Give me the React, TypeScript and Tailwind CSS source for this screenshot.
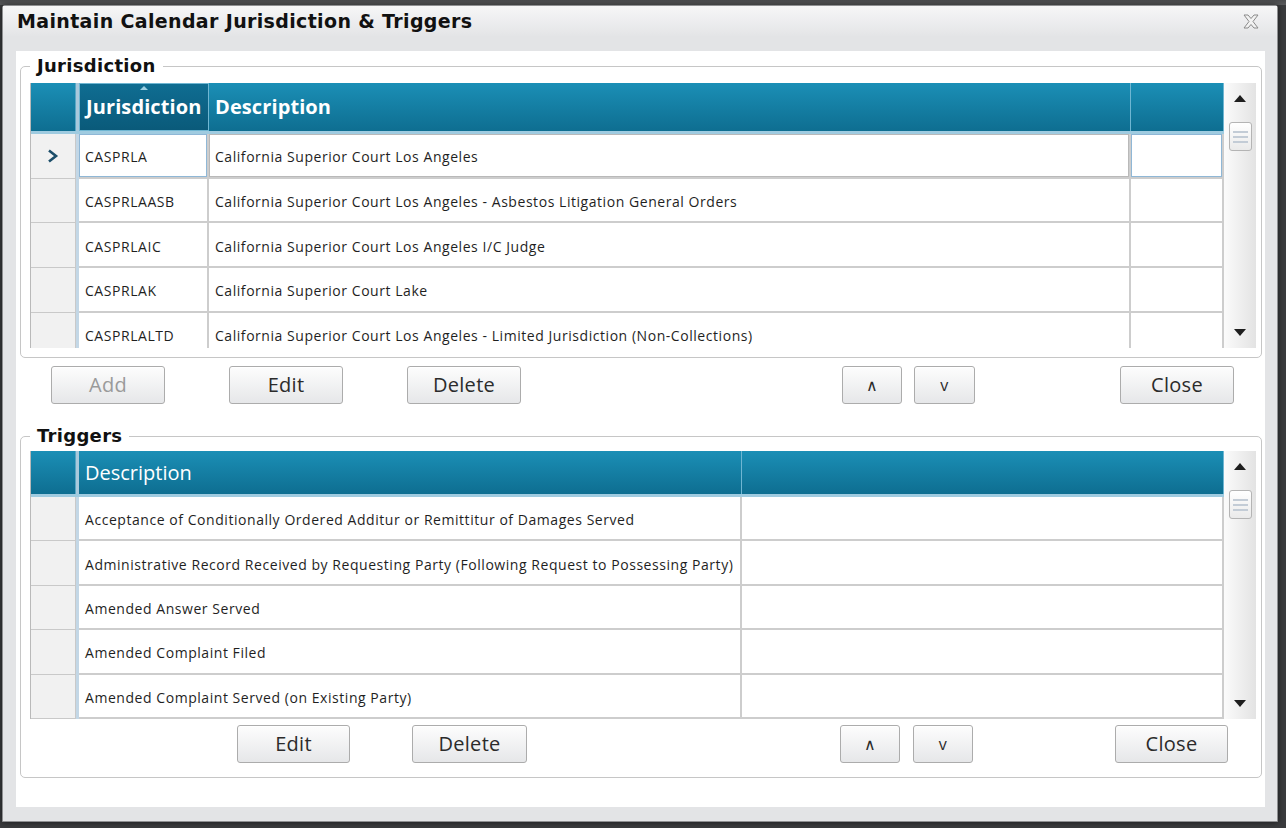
import React from "react";

type Col = { label: string; width?: number; sorted?: boolean };

const jurisdictionRows = [
  ["CASPRLA", "California Superior Court Los Angeles"],
  ["CASPRLAASB", "California Superior Court Los Angeles - Asbestos Litigation General Orders"],
  ["CASPRLAIC", "California Superior Court Los Angeles I/C Judge"],
  ["CASPRLAK", "California Superior Court Lake"],
  ["CASPRLALTD", "California Superior Court Los Angeles - Limited Jurisdiction (Non-Collections)"],
];

const triggerRows = [
  ["Acceptance of Conditionally Ordered Additur or Remittitur of Damages Served"],
  ["Administrative Record Received by Requesting Party (Following Request to Possessing Party)"],
  ["Amended Answer Served"],
  ["Amended Complaint Filed"],
  ["Amended Complaint Served (on Existing Party)"],
];

function Btn({ label, w, disabled, className = "" }: { label: string; w: number; disabled?: boolean; className?: string }) {
  return (
    <button
      type="button"
      style={{ width: w }}
      className={`h-[38px] shrink-0 rounded-[3px] border border-[#acacac] bg-gradient-to-b from-[#fdfdfd] to-[#e6e7e9] leading-none shadow-[inset_0_1px_0_#ffffff] ${
        disabled ? "text-[#9a9a9a]" : "text-[#2b2b2b]"
      } ${className}`}
    >
      {label}
    </button>
  );
}

function ScrollBar() {
  return (
    <div className="w-[32px] shrink-0 flex flex-col items-center bg-gradient-to-r from-[#fbfbfb] to-[#e3e3e3]">
      <div className="mt-[12px] w-0 h-0 border-l-[6px] border-r-[6px] border-b-[7px] border-l-transparent border-r-transparent border-b-[#1e1e1e]" />
      <div className="mt-[20px] w-[23px] h-[29px] rounded-[3px] border border-[#b4b4b4] bg-gradient-to-b from-[#ffffff] to-[#eaeaea] flex flex-col items-center justify-center gap-[3px]">
        <div className="w-[15px] h-[2px] bg-[#c3ccd6]" />
        <div className="w-[15px] h-[2px] bg-[#c3ccd6]" />
        <div className="w-[15px] h-[2px] bg-[#c3ccd6]" />
      </div>
      <div className="flex-1" />
      <div className="mb-[12px] w-0 h-0 border-l-[6px] border-r-[6px] border-t-[7px] border-l-transparent border-r-transparent border-t-[#1e1e1e]" />
    </div>
  );
}

function Grid({
  cols,
  rows,
  headerH,
  rowH,
  boldHeader,
  height,
  selected = -1,
}: {
  cols: Col[];
  rows: string[][];
  headerH: number;
  rowH: number;
  boldHeader?: boolean;
  height: number;
  selected?: number;
}) {
  return (
    <div className="flex" style={{ height }}>
      <div className="flex-1 min-w-0 overflow-hidden flex flex-col border-l border-[#b9b9b9]">
        {/* header */}
        <div className="flex shrink-0 border-b-[3px] border-[#9fcbe0]" style={{ height: headerH }}>
          <div className="w-[45px] shrink-0 bg-gradient-to-b from-[#1b8fb6] to-[#0e6e91] border-r border-[#5aa8c6]" />
          <div className="w-[3px] shrink-0 bg-[#a9c9dc]" />
          {cols.map((c, i) => (
            <div
              key={i}
              style={c.width ? { width: c.width } : undefined}
              className={`${c.width ? "shrink-0" : "flex-1"} relative flex items-center px-[6px] text-white border-r border-[#6fb6d2] ${
                c.sorted
                  ? "bg-gradient-to-b from-[#0f6d92] to-[#0a5a7a] border border-[#4ea6c8]"
                  : "bg-gradient-to-b from-[#1b8fb6] to-[#0e6e91]"
              } ${boldHeader ? "font-bold text-[20px] tracking-[0.1px]" : "text-[20px]"}`}
            >
              {c.sorted && (
                <span className="absolute top-[2px] left-1/2 -translate-x-1/2 w-0 h-0 border-l-[4px] border-r-[4px] border-b-[4px] border-l-transparent border-r-transparent border-b-[#9ccfe2]" />
              )}
              {c.label}
            </div>
          ))}
        </div>
        {/* rows */}
        {rows.map((r, ri) => (
          <div key={ri} className="flex shrink-0 bg-white" style={{ height: rowH }}>
            <div className="w-[45px] shrink-0 bg-[#f1f1f1] border-r border-b border-[#c9c9c9] flex items-center justify-center">
              {ri === selected && (
                <svg width="12" height="14" viewBox="0 0 12 14">
                  <path d="M2 1.5 L9 7 L2 12.5" fill="none" stroke="#1b4d69" strokeWidth="2.6" />
                </svg>
              )}
            </div>
            <div className="w-[3px] shrink-0 bg-[#c3d7e6]" />
            {cols.map((c, ci) => {
              const text = r[ci] ?? "";
              const sel = ri === selected;
              return (
                <div
                  key={ci}
                  style={c.width ? { width: c.width } : undefined}
                  className={`${c.width ? "shrink-0" : "flex-1"} flex items-center pt-[3px] px-[6px] text-[14px] tracking-[0.55px] text-[#1f1f1f] whitespace-nowrap overflow-hidden border-r-2 border-b-2 border-[#cdcdcd] ${
                    sel ? (ci === 1 ? "shadow-[inset_0_0_0_1px_#b9b9b9]" : "shadow-[inset_0_0_0_1px_#8fb7d6]") : ""
                  }`}
                >
                  {text}
                </div>
              );
            })}
          </div>
        ))}
      </div>
      <ScrollBar />
    </div>
  );
}

function GroupBox({ title, children, className = "" }: { title: string; children: React.ReactNode; className?: string }) {
  return (
    <fieldset className={`border border-[#c6c6c6] rounded-[5px] ${className}`}>
      <legend className="px-[7px] text-[18px] leading-[24px] font-bold tracking-[0.3px] text-[#111] font-['DejaVu_Sans',sans-serif]">
        {title}
      </legend>
      {children}
    </fieldset>
  );
}

export default function App() {
  return (
    <div className="w-[1286px] h-[828px] overflow-hidden bg-[#3a3b3d] font-['Open_Sans','Noto_Sans',sans-serif] flex flex-col">
      {/* backdrop strip above the dialog */}
      <div className="h-[5px] shrink-0 bg-gradient-to-b from-[#4a4b4d] to-[#5a5b5d]" />

      {/* dialog */}
      <div className="ml-[2px] w-[1276px] h-[817px] shrink-0 bg-[#e3e4e6] rounded-t-[3px] border border-[#8e8f91] flex flex-col shadow-[0_0_6px_rgba(0,0,0,0.6)]">
        <div className="h-[30px] shrink-0 flex items-center justify-between pl-[14px] pr-[18px] bg-gradient-to-b from-[#f6f6f7] to-[#e4e5e7]">
          <span className="text-[19px] font-bold text-[#111] font-['DejaVu_Sans',sans-serif] tracking-[0.35px]">
            Maintain Calendar Jurisdiction &amp; Triggers
          </span>
          <svg width="16" height="15" viewBox="0 0 16 15">
            <path
              d="M1 1 H5 L8 4.5 L11 1 H15 L10 7.5 L15 14 H11 L8 10.5 L5 14 H1 L6 7.5 Z"
              fill="#f2f2f2"
              stroke="#8a8a8a"
              strokeWidth="1"
              strokeLinejoin="round"
            />
          </svg>
        </div>

        <div className="mt-[15px] ml-[13px] mr-[12px] h-[756px] bg-white flex flex-col pl-[4px] pr-[3px]">
          <GroupBox title="Jurisdiction" className="mt-[3px] pl-[9px] pr-[5px] pt-[5px] pb-[9px]">
            <Grid
              cols={[
                { label: "Jurisdiction", width: 130, sorted: true },
                { label: "Description", width: 922 },
                { label: "" },
              ]}
              rows={jurisdictionRows}
              headerH={51}
              rowH={44.7}
              boldHeader
              height={265}
              selected={0}
            />
          </GroupBox>

          <div className="mt-[8px] flex pl-[31px] text-[20px] tracking-[0.3px]">
            <Btn label="Add" w={114} disabled />
            <Btn label="Edit" w={114} className="ml-[64px]" />
            <Btn label="Delete" w={114} className="ml-[64px]" />
            <Btn label="∧" w={60} className="ml-[321px] text-[16px]" />
            <Btn label="v" w={61} className="ml-[12px] text-[16px]" />
            <Btn label="Close" w={114} className="ml-[145px]" />
          </div>

          <GroupBox title="Triggers" className="mt-[20px] pl-[9px] pr-[5px] pt-[3px] pb-[14px]">
            <Grid
              cols={[{ label: "Description", width: 663 }, { label: "" }]}
              rows={triggerRows}
              headerH={46}
              rowH={44.4}
              height={268}
            />
            <div className="mt-[6px] flex pl-[207px] text-[20px] tracking-[0.3px]">
              <Btn label="Edit" w={113} />
              <Btn label="Delete" w={115} className="ml-[62px]" />
              <Btn label="∧" w={60} className="ml-[313px] text-[16px]" />
              <Btn label="v" w={60} className="ml-[13px] text-[16px]" />
              <Btn label="Close" w={113} className="ml-[142px]" />
            </div>
          </GroupBox>
        </div>
      </div>
    </div>
  );
}
